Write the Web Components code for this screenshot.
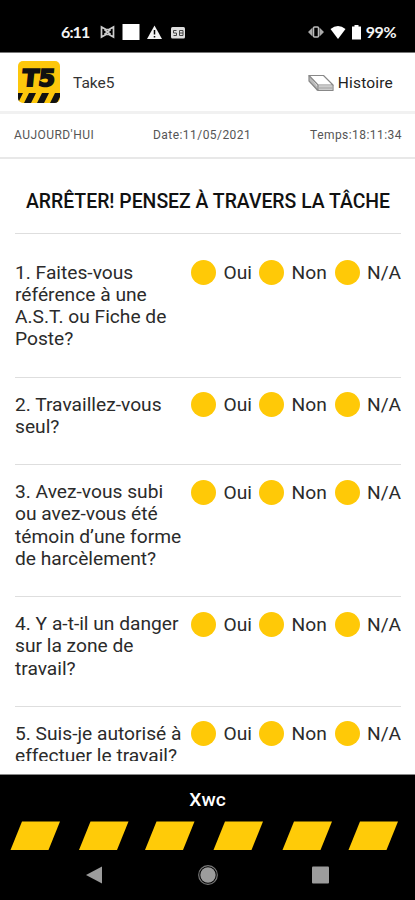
<!DOCTYPE html>
<html lang="fr">
<head>
<meta charset="utf-8">
<meta name="viewport" content="width=device-width, initial-scale=1">
<title>Take5</title>
<style>
  body {
    margin: 0;
    background: #fff;
    font-family: Roboto, "Liberation Sans", sans-serif;
  }
</style>
</head>
<body>
<take-app>
  <status-bar slot="top" time="6:11" battery="99%"></status-bar>
  <app-header slot="top" name="Take5" link="Histoire"></app-header>
  <date-row slot="top">
    <span>AUJOURD'HUI</span>
    <span>Date:11/05/2021</span>
    <span>Temps:18:11:34</span>
  </date-row>
  <page-title>ARRÊTER! PENSEZ À TRAVERS LA TÂCHE</page-title>
  <question-row class="first">1. Faites-vous référence à une A.S.T. ou Fiche de Poste?</question-row>
  <question-row>2. Travaillez-vous seul?</question-row>
  <question-row>3. Avez-vous subi ou avez-vous été témoin d’une forme de harcèlement?</question-row>
  <question-row>4. Y a-t-il un danger sur la zone de travail?</question-row>
  <question-row>5. Suis-je autorisé à effectuer le travail?</question-row>
  <app-footer slot="bottom">Xwc</app-footer>
</take-app>

<script>
class TakeApp extends HTMLElement {
  connectedCallback() {
    this.attachShadow({ mode: 'open' });
    this.shadowRoot.innerHTML = `
      <style>
        :host {
          display: flex;
          flex-direction: column;
          height: 900px;
          overflow: hidden;
        }

        main {
          flex: 1;
          min-height: 0;
          padding: 0 14px 0 15px;
          overflow: hidden;
          margin-bottom: 13px;
        }
      </style>
      <slot name="top"></slot>
      <main><slot></slot></main>
      <slot name="bottom"></slot>
    `;
  }
}

class StatusBar extends HTMLElement {
  connectedCallback() {
    this.attachShadow({ mode: 'open' });
    this.shadowRoot.innerHTML = `
      <style>
        :host {
          display: flex;
          align-items: center;
          justify-content: space-between;
          flex: none;
          box-sizing: border-box;
          height: 53px;
          padding: 12px 19px 0 61px;
          background: #000;
          border-bottom: 1px solid #777;
          color: #f4f4f4;
          font: 700 16px/20px Lato, sans-serif;
          letter-spacing: -0.5px;
        }

        .group {
          display: flex;
          align-items: center;
        }

        .time {
          width: 30px;
          letter-spacing: -0.9px;
        }

        svg { display: block; }
      </style>
      <div class="group">
        <span class="time">${this.getAttribute('time')}</span>
        <svg width="86" height="20" style="margin-left: 9px">
          <g fill="none" stroke="#ccc" stroke-width="1.700">
            <path d="M1.5 5v10l4.500-2.500h3l4.500 2.500V5L9 7.500H6z"/>
            <path d="M4.500 7.500l6 5M10.500 7.500l-6 5"/>
          </g>
          <path d="M22.500 2h17v16h-17z" fill="#fff"/>
          <path d="M54.500 3.500l7.500 13.500H47z" fill="#f2f2f2"/>
          <path d="M54.500 8v4.500M54.500 14v1.500" stroke="#000" stroke-width="1.500"/>
          <rect x="71" y="5" width="14" height="11.500" rx="1.500" fill="#ddd"/>
          <path d="M76.500 8.500h-3v2.500h3v2.500h-3M79.500 8.500h3.500v5h-3.500zM79.500 11h3.500" fill="none" stroke="#444" stroke-width="1"/>
        </svg>
      </div>
      <div class="group">
        <svg width="59" height="20">
          <path d="M5.500 5.500v9L1 10zM12.500 5.500v9L17 10z" fill="#aaa"/>
          <rect x="6.500" y="5" width="5" height="10" rx="1" fill="#000" stroke="#bbb" stroke-width="1.500"/>
          <path d="M23.500 7Q31 1 38.500 7L31 17z" fill="#fff"/>
          <path d="M45 4.500h2.500V3h4v1.500H54v13h-9z" fill="#fff"/>
        </svg>
        <span class="battery">${this.getAttribute('battery')}</span>
      </div>
    `;
  }
}

class AppHeader extends HTMLElement {
  connectedCallback() {
    this.attachShadow({ mode: 'open' });
    this.shadowRoot.innerHTML = `
      <style>
        :host {
          display: flex;
          align-items: center;
          flex: none;
          box-sizing: border-box;
          height: 61px;
          padding: 2px 22px 0 17px;
          border-bottom: 3px solid #f1f1f1;
          color: #333;
          font-size: 15.500px;
        }

        .name {
          flex: 1;
          margin-left: 12px;
        }

        .link {
          margin-left: 4px;
          color: #222;
          letter-spacing: 0.2px;
        }

        svg { display: block; }
      </style>
      <svg width="44" height="44" viewBox="0 0 44 44">
        <defs><clipPath id="tile"><rect x="1" y="0" width="42" height="42" rx="5"/></clipPath></defs>
        <g clip-path="url(#tile)">
          <path d="M0 0h44v44H0z" fill="#fdc70c"/>
          <text transform="translate(4.500 25) skewX(-6)" textLength="33" lengthAdjust="spacingAndGlyphs" font-family="DejaVu Sans" font-weight="700" font-size="23" fill="#111" stroke="#111" stroke-width="1.800">T5</text>
          <path d="M-1 32h7L1 42h-5zM12 32h7l-5 10H7zM25 32h7l-5 10h-7zM38 32h7l-5 10h-7z" fill="#111"/>
        </g>
      </svg>
      <span class="name">${this.getAttribute('name')}</span>
      <svg width="26" height="18" viewBox="0 0 26 18">
        <path d="M1 1.500l8 10.500v5L1 6.500z" fill="#bbb"/>
        <path d="M9 12h15.500v4.500H9z" fill="#ccc"/>
        <g fill="none" stroke="#888" stroke-width="1.200" stroke-linejoin="round">
          <path d="M1 1.500h14.500L25 11H10z" fill="#fff"/>
          <path d="M1 1.500V7l9 9.500h15V11M10 11v5.500"/>
          <path d="M10 14h15" stroke="#aaa"/>
        </g>
      </svg>
      <span class="link">${this.getAttribute('link')}</span>
    `;
  }
}

class DateRow extends HTMLElement {
  connectedCallback() {
    this.attachShadow({ mode: 'open' });
    this.shadowRoot.innerHTML = `
      <style>
        :host {
          display: flex;
          align-items: center;
          justify-content: space-between;
          flex: none;
          box-sizing: border-box;
          height: 45px;
          padding: 0 13px 1px 14px;
          border-bottom: 2px solid #e8e8e8;
          color: #555;
          font-size: 12px;
          letter-spacing: 0.45px;
        }
      </style>
      <slot></slot>
    `;
  }
}

class PageTitle extends HTMLElement {
  connectedCallback() {
    this.attachShadow({ mode: 'open' });
    this.shadowRoot.innerHTML = `
      <style>
        :host {
          display: block;
          height: 74px;
          padding-top: 1px;
          box-sizing: border-box;
          color: #111;
          font-size: 19.400px;
          font-weight: 500;
          line-height: 84px;
          text-align: center;
          white-space: nowrap;
        }
      </style>
      <slot></slot>
    `;
  }
}

class AnswerOption extends HTMLElement {
  connectedCallback() {
    this.attachShadow({ mode: 'open' });
    this.shadowRoot.innerHTML = `
      <style>
        :host {
          display: flex;
          align-items: center;
          gap: 7.500px;
          height: 22px;
          white-space: nowrap;
        }

        .dot {
          flex: none;
          width: 25px;
          height: 25px;
          border-radius: 50%;
          background: #ffc907;
        }

        .label { padding-top: 1px; }
      </style>
      <span class="dot"></span>
      <span class="label"><slot></slot></span>
    `;
  }
}

class QuestionRow extends HTMLElement {
  connectedCallback() {
    this.attachShadow({ mode: 'open' });
    this.shadowRoot.innerHTML = `
      <style>
        :host {
          display: grid;
          grid-template-columns: 170px 210px;
          justify-content: space-between;
          align-items: start;
          padding: 16px 0 26.200px;
          border-top: 1.500px solid #dedede;
          color: #2b2b2b;
          font-size: 19.200px;
          line-height: 22.200px;
        }

        :host(.first) {
          padding-top: 27.500px;
        }

        .question { display: block; }

        .answers {
          display: grid;
          grid-template-columns: 68px 75.500px 66.500px;
        }
      </style>
      <slot class="question"></slot>
      <div class="answers">
        <answer-option>Oui</answer-option>
        <answer-option>Non</answer-option>
        <answer-option>N/A</answer-option>
      </div>
    `;
  }
}

class AppFooter extends HTMLElement {
  connectedCallback() {
    const stripes = [10.5, 79, 145, 213.5, 282.5, 348.5]
      .map(x => `<path d="M${x + 11.5} 1.500h38l-11.500 28.500h-38z"/>`)
      .join('');
    this.attachShadow({ mode: 'open' });
    this.shadowRoot.innerHTML = `
      <style>
        :host {
          display: flex;
          flex-direction: column;
          align-items: center;
          flex: none;
          box-sizing: border-box;
          height: 126px;
          padding-top: 13px;
          background: #000;
          border-top: 1px solid #888;
          color: #fff;
          font-size: 19.200px;
          font-weight: 500;
          line-height: 24px;
        }

        .stripes {
          display: block;
          margin-top: 8px;
          fill: #ffcb08;
        }

        .nav {
          display: block;
          margin-top: 14px;
          fill: #9c9c9c;
        }
      </style>
      <span><slot></slot></span>
      <svg class="stripes" width="415" height="30">${stripes}</svg>
      <svg class="nav" width="415" height="24">
        <path d="M86 11L102 2.500v17z"/>
        <circle cx="208" cy="11" r="9.300" fill="none" stroke="#777" stroke-width="1.200"/>
        <circle cx="208" cy="11" r="7.700"/>
        <rect x="312" y="2.500" width="17" height="17" rx="1"/>
      </svg>
    `;
  }
}

customElements.define('take-app', TakeApp);
customElements.define('status-bar', StatusBar);
customElements.define('app-header', AppHeader);
customElements.define('date-row', DateRow);
customElements.define('page-title', PageTitle);
customElements.define('answer-option', AnswerOption);
customElements.define('question-row', QuestionRow);
customElements.define('app-footer', AppFooter);
</script>
</body>
</html>
